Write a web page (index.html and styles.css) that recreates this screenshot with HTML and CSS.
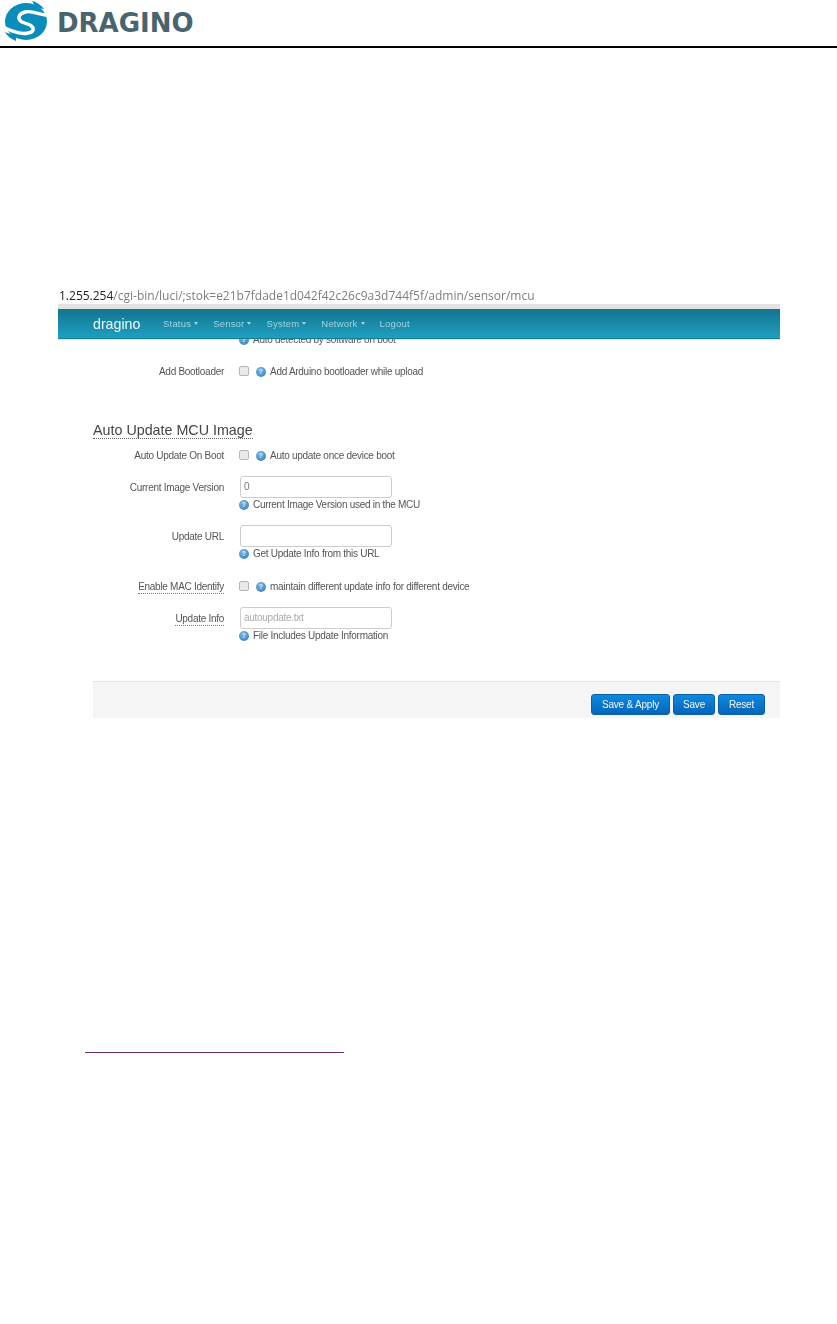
FILE: index.html
```html
<!DOCTYPE html>
<html lang="en">
<head>
    <meta charset="UTF-8">
    <meta name="viewport" content="width=device-width, initial-scale=1.0">
    <title>Dragino MCU settings</title>
    <link rel="stylesheet" href="styles.css">
</head>
<body>
    <header class="page-header">
        <svg class="logo-mark" viewBox="0 0 52 42" width="52" height="42">
            <ellipse cx="26" cy="20.5" rx="21" ry="18.5" fill="#0a8dbb"/>
            <path d="M47 14 C40 14 32 9 25 11 C18 13 17 18 22 21 L30 24 C35 27 34 31 28 32 C21 34 12 30 5 27" fill="none" stroke="#fff" stroke-width="3.4"/>
            <path d="M32 0 C37 1 41 4 44 8 L36 7 Z" fill="#0a8dbb"/>
            <path d="M5 31 C7 35 11 38 16 40 L16 35 Z" fill="#0a8dbb"/>
        </svg>
        <span class="logo-text">DRAGINO</span>
    </header>

    <section class="shot">
        <p class="url"><b>1.255.254</b>/cgi-bin/luci/;stok=e21b7fdade1d042f42c26c9a3d744f5f/admin/sensor/mcu</p>

        <nav class="navbar">
            <span class="brand">dragino</span>
            <span class="nav-item">Status<i class="caret"></i></span>
            <span class="nav-item">Sensor<i class="caret"></i></span>
            <span class="nav-item">System<i class="caret"></i></span>
            <span class="nav-item">Network<i class="caret"></i></span>
            <span class="nav-item">Logout</span>
        </nav>

        <div class="content">
            <div class="row row-cut">
                <span class="label"></span>
                <div class="field"><span class="help"><i class="help-icon">?</i>Auto detected by software on boot</span></div>
            </div>

            <div class="row row-boot">
                <span class="label">Add Bootloader</span>
                <div class="field check-line"><i class="checkbox"></i><span class="help"><i class="help-icon">?</i>Add Arduino bootloader while upload</span></div>
            </div>

            <h3 class="section-title">Auto Update MCU Image</h3>

            <div class="row row-auto">
                <span class="label">Auto Update On Boot</span>
                <div class="field check-line"><i class="checkbox"></i><span class="help"><i class="help-icon">?</i>Auto update once device boot</span></div>
            </div>

            <div class="row row-version">
                <span class="label label-tall">Current Image Version</span>
                <div class="field">
                    <div class="input">0</div>
                    <span class="help"><i class="help-icon">?</i>Current Image Version used in the MCU</span>
                </div>
            </div>

            <div class="row row-url">
                <span class="label label-tall">Update URL</span>
                <div class="field">
                    <div class="input"></div>
                    <span class="help"><i class="help-icon">?</i>Get Update Info from this URL</span>
                </div>
            </div>

            <div class="row row-mac">
                <span class="label"><u class="dotted">Enable MAC Identify</u></span>
                <div class="field check-line"><i class="checkbox"></i><span class="help"><i class="help-icon">?</i>maintain different update info for different device</span></div>
            </div>

            <div class="row row-info">
                <span class="label label-tall"><u class="dotted">Update Info</u></span>
                <div class="field">
                    <div class="input input-hint">autoupdate.txt</div>
                    <span class="help"><i class="help-icon">?</i>File Includes Update Information</span>
                </div>
            </div>

            <div class="actions">
                <button class="btn btn-apply">Save &amp; Apply</button>
                <button class="btn btn-save">Save</button>
                <button class="btn btn-reset">Reset</button>
            </div>
        </div>
    </section>

    <div class="link-line"></div>
</body>
</html>
```

FILE: styles.css
```css
body {
    margin: 0;
    min-height: 1324px;
    background-color: #fff;
    font-family: "Liberation Sans", Arial, sans-serif;
    color: #555;
}

.page-header {
    display: flex;
    align-items: center;
    height: 46px;
    border-bottom: 2px solid #000;
    box-sizing: content-box;
}
.logo-mark {
    flex: none;
    margin-top: -3px;
}
.logo-text {
    margin-left: 5px;
    margin-top: -1px;
    font-family: "DejaVu Sans", sans-serif;
    font-weight: bold;
    font-size: 26px;
    color: #48646e;
}

.shot {
    width: 722px;
    margin: 237px 0 0 58px;
    filter: blur(0.3px);
}
.url {
    margin: 0;
    height: 19px;
    padding-left: 1px;
    font-family: "Open Sans", sans-serif;
    font-size: 12px;
    line-height: 21px;
    color: #7d7d7d;
    white-space: nowrap;
}
.url b {
    font-weight: normal;
    color: #222;
}

.navbar {
    display: flex;
    align-items: center;
    gap: 15px;
    height: 29px;
    padding-left: 35px;
    border-top: 5px solid #e2e2e2;
    border-bottom: 1px solid #14808f;
    box-shadow: 0 1px 1px #dfe3ee;
    background: linear-gradient(#12748f, #1fa0c1);
}
.brand {
    width: 48px;
    margin-right: 7px;
    font-size: 14.2px;
    color: #f0f8fa;
}
.nav-item {
    font-size: 9.5px;
    letter-spacing: 0.2px;
    color: #a3d2de;
}
.caret {
    display: inline-block;
    margin-left: 3px;
    vertical-align: 2px;
    border-top: 3px solid #a3d2de;
    border-left: 2.5px solid transparent;
    border-right: 2.5px solid transparent;
}

.content {
    overflow: hidden;
    height: 379px;
}
.row {
    display: grid;
    grid-template-columns: 166px 1fr;
    column-gap: 15px;
    font-size: 10px;
    letter-spacing: -0.28px;
    line-height: 14px;
}
.row-cut { margin-top: -6px; }
.row-boot { margin-top: 17px; }
.row-auto { margin-top: 9px; }
.row-version { margin-top: 13px; }
.row-url { margin-top: 13px; }
.row-mac { margin-top: 18px; }
.row-info { margin-top: 13px; }

.label {
    padding-top: 1px;
    text-align: right;
    color: #555;
}
.label-tall {
    padding-top: 0;
    line-height: 24px;
}
.dotted {
    text-decoration: none;
    border-bottom: 1px dotted #777;
    padding-bottom: 1px;
}
.field {
    display: flex;
    flex-direction: column;
    align-items: flex-start;
}
.check-line {
    flex-direction: row;
    align-items: center;
    gap: 7px;
}
.check-line .help {
    padding-top: 1px;
}
.checkbox {
    width: 8px;
    height: 8px;
    margin-top: -2px;
    border: 1px solid #b5b5b5;
    border-radius: 2px;
    background: #e9e9e9;
}
.help {
    display: flex;
    align-items: center;
    color: #555;
    white-space: nowrap;
}
.help-icon {
    flex: none;
    width: 10px;
    height: 10px;
    margin-right: 4px;
    border-radius: 50%;
    background: radial-gradient(circle at 40% 30%, #7fb6e2, #2d7ab8);
    font-family: "Liberation Sans", sans-serif;
    font-size: 7px;
    font-style: normal;
    font-weight: bold;
    letter-spacing: 0;
    line-height: 10px;
    text-align: center;
    color: #dcecf8;
}
.input {
    box-sizing: border-box;
    width: 152px;
    height: 22px;
    margin-left: 1px;
    padding-left: 3px;
    border: 1px solid #ccc;
    border-radius: 3px;
    background: #fff;
    font-size: 10px;
    line-height: 20px;
    color: #777;
}
.input-hint {
    color: #aaa;
}

.section-title {
    width: fit-content;
    margin: 43px 0 0 35px;
    border-bottom: 1px dotted #666;
    font-size: 14.3px;
    font-weight: normal;
    line-height: 16px;
    color: #444;
}

.actions {
    display: flex;
    justify-content: flex-end;
    gap: 3px;
    box-sizing: border-box;
    height: 37px;
    margin: 38px 0 0 35px;
    padding: 12px 15px 0 0;
    border-top: 1px solid #e5e5e5;
    background: #f5f5f5;
}
.btn {
    height: 21px;
    padding: 0;
    border: 1px solid #0a5fa8;
    border-radius: 3px;
    background: linear-gradient(#0c8ae0, #0664b8);
    font-family: "Liberation Sans", sans-serif;
    font-size: 10px;
    letter-spacing: -0.2px;
    color: #f2f8fd;
}
.btn-apply { width: 79px; }
.btn-save { width: 42px; }
.btn-reset { width: 47px; }

.link-line {
    width: 259px;
    height: 1px;
    margin: 333px 0 0 85px;
    border-bottom: 1px solid #6b2f6e;
}
```
